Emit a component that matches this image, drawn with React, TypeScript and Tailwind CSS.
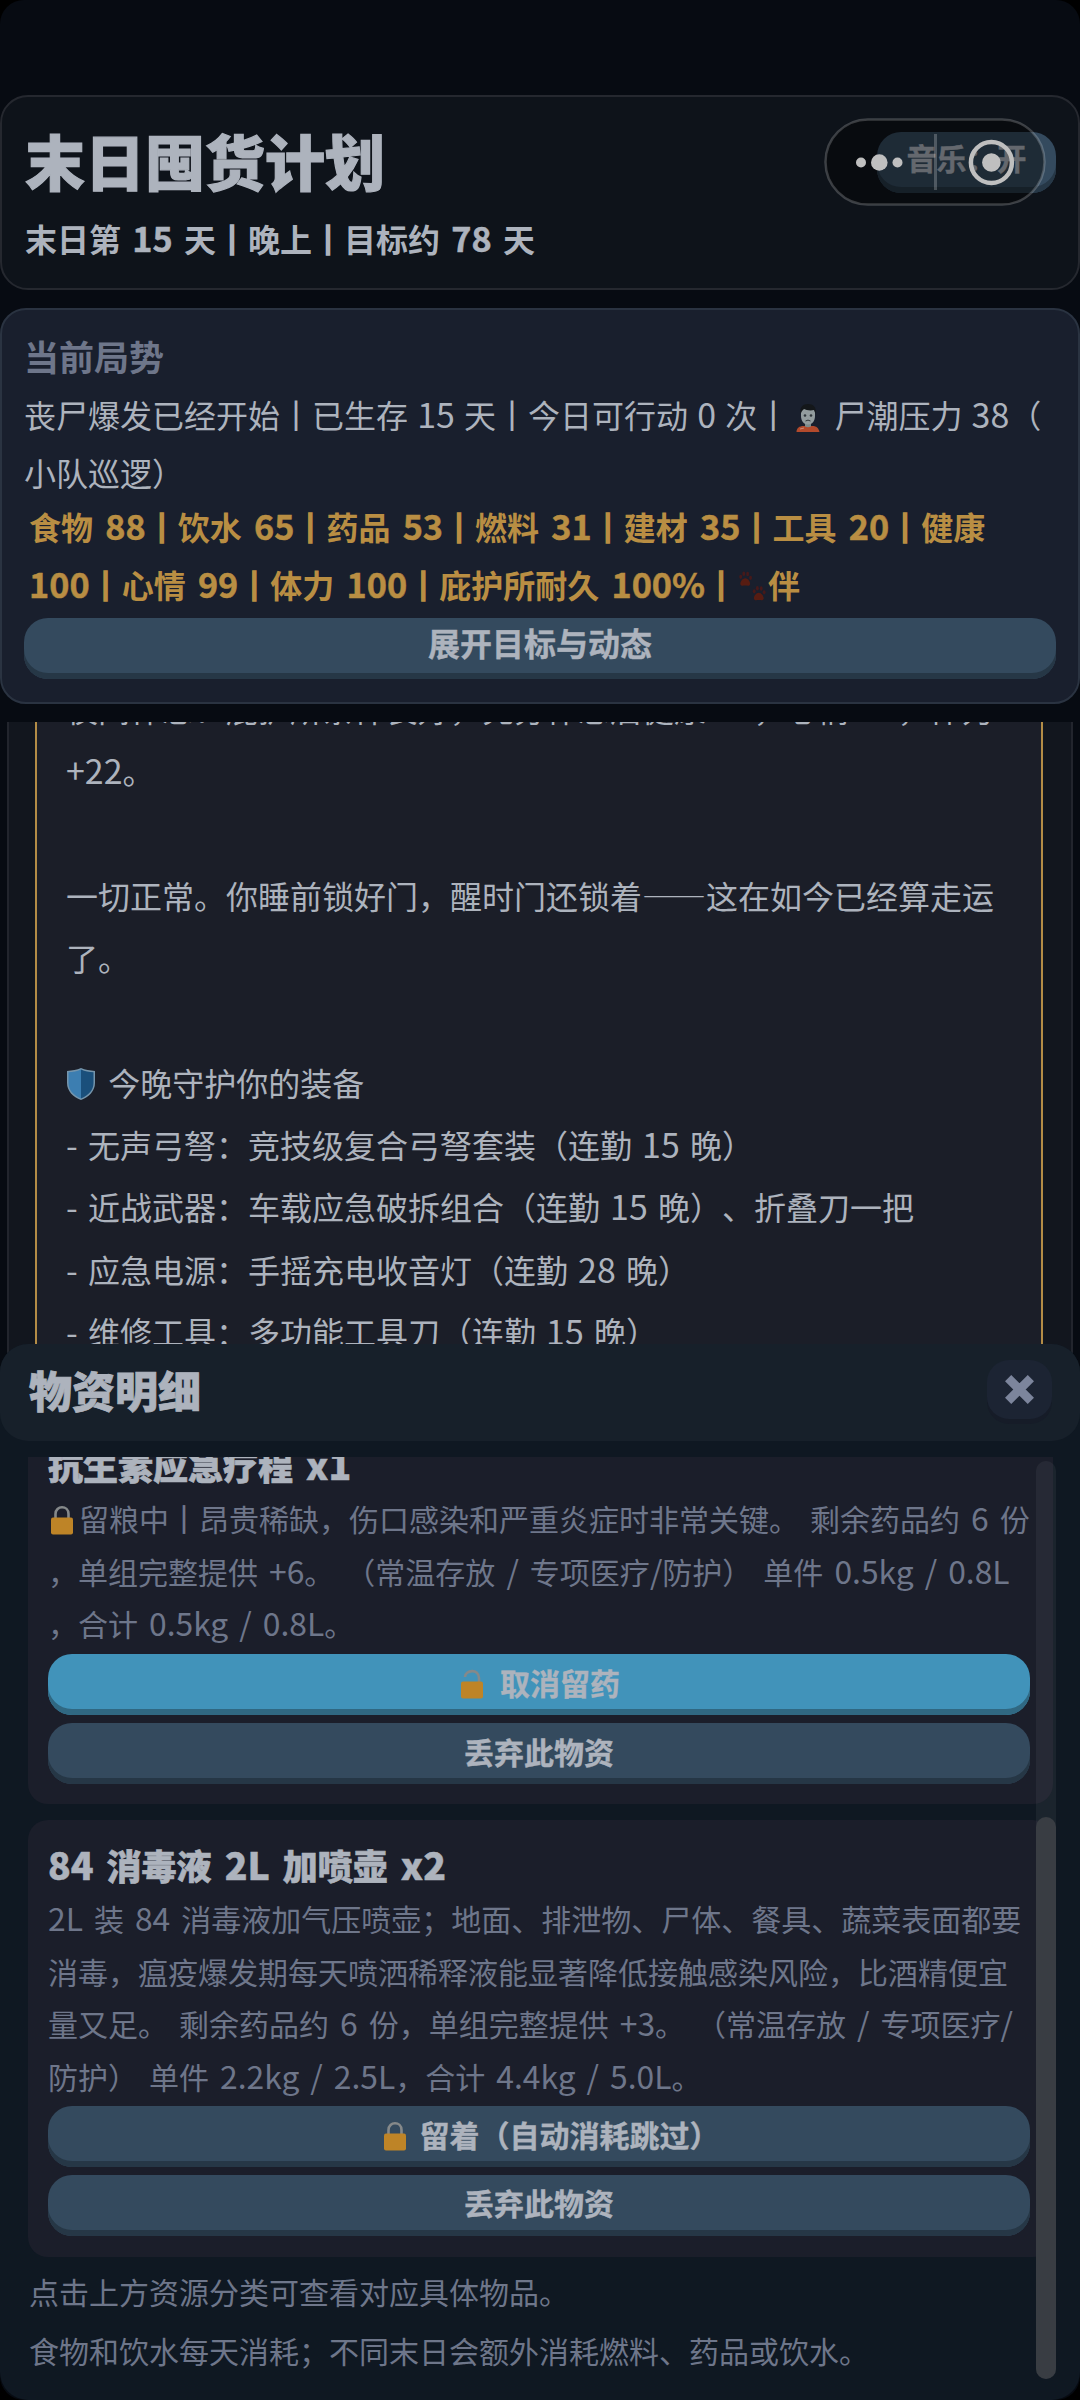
import React from 'react';

const Bar = ({ bold }: { bold?: boolean }) => (
  <span
    className={`inline-block ${
      bold ? 'scale-y-[0.9] [-webkit-text-stroke:3px]' : 'scale-y-[0.92] [-webkit-text-stroke:1.3px]'
    }`}
  >
    ｜
  </span>
);

// latin runs are set a bit larger than the chinese around them
const Mixed = ({ text, bold }: { text: string; bold?: boolean }) => (
  <>
    {text.split(/([0-9A-Za-z+%.\/-]+|｜)/).map((part, i) => {
      if (part === '｜') return <Bar key={i} bold={bold} />;
      if (i % 2 === 0) return part;
      return (
        <span
          key={i}
          className={bold ? 'text-[1.07em] leading-none [-webkit-text-stroke:0.5px]' : 'text-[1.06em] leading-none'}
        >
          {part}
        </span>
      );
    })}
  </>
);

const Lock = ({ open = false }: { open?: boolean }) => (
  <svg viewBox="0 0 28 32" className="mr-[3px] inline-block w-[28px] h-[32px] align-[-5px]">
    <path
      d={open ? 'M7 9c0-7 14-9 14 1v5' : 'M7.500 16V10c0-9 13-9 13 0v6'}
      fill="none"
      stroke="#85898a"
      strokeWidth="2.600"
    />
    <rect x="3" y="13.500" width="22" height="17" rx="2" fill="#be8427" />
  </svg>
);

const Shield = () => (
  <svg viewBox="0 0 30 34" className="mr-[2px] inline-block w-[30px] h-[34px] align-[-5px]">
    <path d="M15 1C19 3 24 3.500 29 4v12c0 8-6 14-14 17C7 30 1 24 1 16V4c5-.5 10-1 14-3z" fill="#7595ac" />
    <path d="M15 2.500C11 4.500 7 5 2.500 5.300V16c0 7 5 12.500 12.500 15.500z" fill="#3c7eb1" />
    <path d="M15 2.500c4 2 8 2.500 12.500 2.800V16c0 7-5 12.500-12.500 15.500z" fill="#1a4f7b" />
  </svg>
);

const Zombie = () => (
  <svg viewBox="0 0 24 30" className="ml-[7px] mr-[5px] inline-block w-[24px] h-[30px] align-[-5px]">
    <path d="M.5 29c0-4 3-6 7-6h9c4 0 6 2 7 6z" fill="#b34a2c" />
    <path d="M9 18h6v5.500q-3 1.500-6 0z" fill="#7c8a8b" />
    <path d="M5 9c0-3 3-4 7-4s7 1 7 4v4c0 5-3 8.500-7 8.500S5 18 5 13z" fill="#939c9e" />
    <path d="M4.500 11C3.500 4 7 1 12 1s9 3 7.500 10l-1.500-4c-4 1-8 0-10-1l-2 2z" fill="#14171a" />
    <circle cx="9" cy="12.500" r="1.300" fill="#30373b" />
    <circle cx="15" cy="12.500" r="1.300" fill="#30373b" />
    <path d="M9.500 18q2.500-1.800 5 0" stroke="#30373b" fill="none" />
    <path d="M4 26l4-1" stroke="#cf8a77" />
  </svg>
);

const Paw = ({ x, y }: { x: number; y: number }) => (
  <g transform={`translate(${x} ${y})`}>
    <path d="M6.500 7.500c3 0 5.500 4 5 6.500-1 2-3 1-5 1s-4 1-5-1c-.5-2.500 2-6.500 5-6.500z" fill="#571c12" />
    <ellipse cx="1.800" cy="6" rx="1.500" ry="2.200" />
    <ellipse cx="5" cy="2.800" rx="1.500" ry="2.300" />
    <ellipse cx="9" cy="3" rx="1.500" ry="2.300" />
    <ellipse cx="12" cy="7" rx="1.500" ry="2.200" />
  </g>
);

const Paws = () => (
  <svg viewBox="0 0 30 34" className="mx-[1px] inline-block w-[29px] h-[33px] align-[-5px]" fill="#45191a">
    <Paw x={1} y={1} />
    <Paw x={15} y={16} />
  </svg>
);

interface ButtonProps {
  children: React.ReactNode;
  active?: boolean;
  className?: string;
}

const GameButton: React.FC<ButtonProps> = ({ children, active, className }) => (
  <button
    className={`block w-full h-[61px] rounded-[24px] text-center font-bold whitespace-nowrap text-[#adb3bd] [-webkit-text-stroke:0.4px] ${
      active ? 'bg-[#4193ba] shadow-[inset_0_-6px_0_#306882]' : 'bg-[#344a5e] shadow-[inset_0_-6px_0_#263746]'
    } ${className ?? ''}`}
  >
    {children}
  </button>
);

const Header = () => (
  <header className="relative h-[195px] rounded-[28px] border-2 border-[#25282f] bg-[#0e131a] pl-[23px] text-[#adb3bd]">
    <h1 className="pt-[27px] text-[60px] leading-[72px] font-black [-webkit-text-stroke:1.2px]">末日囤货计划</h1>
    <p className="pt-[18px] text-[32px] leading-[48px] [word-spacing:4px] font-bold">
      <Mixed bold text="末日第 15 天｜晚上｜目标约 78 天" />
    </p>
    <div className="absolute right-[22px] top-[35px] w-[179px]">
      <GameButton className="pb-[10px] text-[30px]">音乐：开</GameButton>
    </div>
    {/* host app capsule floats over the music button */}
    <svg viewBox="0 0 222 88" className="absolute left-[822px] top-[21px] w-[222px] h-[88px]">
      <rect x="1.500" y="1.500" width="219" height="85" rx="42.500" fill="#000" fillOpacity=".42" stroke="#fff" strokeOpacity=".2" strokeWidth="2.500" />
      <path d="M111.500 16v56" stroke="#fff" strokeOpacity=".22" strokeWidth="3" />
      <g fill="#bfbfbf">
        <circle cx="37" cy="44.500" r="5" />
        <circle cx="55.300" cy="44.500" r="8.300" />
        <circle cx="73.500" cy="44.500" r="5" />
        <circle cx="167.400" cy="44.500" r="9.300" />
      </g>
      <circle cx="167.400" cy="44.500" r="20.500" fill="none" stroke="#bfbfbf" strokeWidth="4.500" />
    </svg>
  </header>
);

const Status = () => (
  <section className="mt-[18px] h-[396px] rounded-[26px] border-2 border-[#2a3341] bg-[#191f2d] px-[22px] pt-[20px] whitespace-nowrap">
    <h2 className="text-[35px] leading-[52px] font-bold text-[#6e768a]">当前局势</h2>
    <div className="mt-[3px] text-[32px] [word-spacing:2px] text-[#adb3bd]">
      <p className="h-[58px] leading-[58px]">
        <Mixed text="丧尸爆发已经开始｜已生存 15 天｜今日可行动 0 次｜" />
        <Zombie /> <Mixed text="尸潮压力 38（" />
      </p>
      <p className="h-[58px] leading-[58px]">小队巡逻）</p>
    </div>
    <div className="-mt-[4px] pl-[5px] text-[32px] [word-spacing:5px] font-bold text-[#b98e43]">
      <p className="h-[58px] leading-[58px]">
        <Mixed bold text="食物 88｜饮水 65｜药品 53｜燃料 31｜建材 35｜工具 20｜健康" />
      </p>
      <p className="h-[58px] leading-[58px]">
        <Mixed bold text="100｜心情 99｜体力 100｜庇护所耐久 100%｜" />
        <Paws />伴
      </p>
    </div>
    <GameButton className="mt-[5px] pb-[13px] text-[32px]">展开目标与动态</GameButton>
  </section>
);

const log = [
  '夜间休息：庇护所条件良好，充分休息后健康 +6，心情 +8，体力',
  '+22。',
  '',
  '一切正常。你睡前锁好门，醒时门还锁着——这在如今已经算走运',
  '了。',
  '',
  'shield',
  '- 无声弓弩：竞技级复合弓弩套装（连勤 15 晚）',
  '- 近战武器：车载应急破拆组合（连勤 15 晚）、折叠刀一把',
  '- 应急电源：手摇充电收音灯（连勤 28 晚）',
  '- 维修工具：多功能工具刀（连勤 15 晚）',
];

const EventLog = () => (
  <section className="mx-[7px] mt-[18px] h-[680px] overflow-hidden border-x-2 border-[#22252d] bg-[#12161e] pl-[26px] pr-[28px]">
    <div className="h-full border-x-2 border-[#b38c46] bg-[#1b1e28] pl-[29px] text-[32px] [word-spacing:3px] whitespace-nowrap text-[#adb3bd]">
      <div className="-mt-[45px]">
        {log.map((line, i) => (
          <p key={i} className="h-[62.300px] leading-[62px]">
            {line === 'shield' ? (
              <>
                <Shield /> 今晚守护你的装备
              </>
            ) : (
              <Mixed text={line} />
            )}
          </p>
        ))}
      </div>
    </div>
  </section>
);

interface ItemProps {
  name: string;
  locked?: boolean;
  lines: string[];
  children: React.ReactNode;
  className: string;
}

const SupplyItem: React.FC<ItemProps> = ({ name, locked, lines, children, className }) => (
  <div className={`rounded-[20px] bg-[#1b1e2a] px-[20px] pt-[19px] ${className}`}>
    <h3 className="h-[52px] text-[35px] leading-[52px] [word-spacing:5px] font-black text-[#adb3bd] [-webkit-text-stroke:0.6px]">
      <Mixed bold text={name} />
    </h3>
    <div className="mt-[1px] text-[30px] [word-spacing:4.300px]">
      {lines.map((line, i) => (
        <p key={i} className="h-[52.500px] leading-[52px]">
          {locked && i === 0 && <Lock />}
          <Mixed text={line} />
        </p>
      ))}
    </div>
    <div className="mt-[4px] flex w-[982px] flex-col gap-[8px]">{children}</div>
  </div>
);

const Supplies = () => (
  <section className="absolute inset-x-0 top-[1344px] h-[1056px] rounded-[28px] bg-[#0f1822] text-[#6e768a]">
    <div className="flex h-[97px] items-center justify-between rounded-[28px] bg-[#17202a] pl-[29px] pr-[28px]">
      <h2 className="mb-[6px] text-[43px] font-black text-[#adb3bd] [-webkit-text-stroke:0.8px]">物资明细</h2>
      <button className="mb-[7px] flex h-[59px] w-[65px] items-center justify-center rounded-[22px] bg-[#1c2433] shadow-[0_5px_0_#161c28]">
        <svg viewBox="0 0 30 30" className="h-[31px] w-[31px]">
          <path d="M4 4l22 22M26 4L4 26" stroke="#7c859c" strokeWidth="8.500" />
        </svg>
      </button>
    </div>

    <div className="relative mt-[16px] h-[943px] overflow-hidden pl-[28px] pr-[27px] whitespace-nowrap">
      <SupplyItem
        name="抗生素应急疗程 x1"
        locked
        lines={[
          '留粮中｜昂贵稀缺，伤口感染和严重炎症时非常关键。 剩余药品约 6 份',
          '，单组完整提供 +6。 （常温存放 / 专项医疗/防护） 单件 0.5kg / 0.8L',
          '，合计 0.5kg / 0.8L。',
        ]}
        className="-mt-[37px] h-[384px]"
      >
        <GameButton active className="pb-[3px] text-[30px] [word-spacing:4px]">
          <Lock open /> 取消留药
        </GameButton>
        <GameButton className="pb-[4px] text-[30px]">丢弃此物资</GameButton>
      </SupplyItem>

      <SupplyItem
        name="84 消毒液 2L 加喷壶 x2"
        lines={[
          '2L 装 84 消毒液加气压喷壶；地面、排泄物、尸体、餐具、蔬菜表面都要',
          '消毒，瘟疫爆发期每天喷洒稀释液能显著降低接触感染风险，比酒精便宜',
          '量又足。 剩余药品约 6 份，单组完整提供 +3。 （常温存放 / 专项医疗/',
          '防护） 单件 2.2kg / 2.5L，合计 4.4kg / 5.0L。',
        ]}
        className="mt-[16px] h-[437px]"
      >
        <GameButton className="pb-[5px] pl-[22px] text-[30px] [word-spacing:1px]">
          <Lock /> 留着（自动消耗跳过）
        </GameButton>
        <GameButton className="pb-[6px] text-[30px]">丢弃此物资</GameButton>
      </SupplyItem>

      <div className="pt-[5px] pl-[1px] text-[30px] leading-[59px]">
        <p>点击上方资源分类可查看对应具体物品。</p>
        <p>食物和饮水每天消耗；不同末日会额外消耗燃料、药品或饮水。</p>
      </div>

      {/* scrollbar */}
      <div className="absolute right-[24px] top-[4px] h-[918px] w-[20px] rounded-full bg-white/5">
        <div className="h-[562px] translate-y-[356px] rounded-full bg-[#393d43]" />
      </div>
    </div>
  </section>
);

export default function App() {
  return (
    <div
      lang="zh-CN"
      className="h-[2400px] w-[1080px] bg-black font-['Noto_Sans_CJK_SC',sans-serif] [text-spacing-trim:space-all]"
    >
      <main className="relative h-full overflow-hidden rounded-[24px] bg-[#070b12] pt-[95px]">
        <Header />
        <Status />
        <EventLog />
        <Supplies />
      </main>
    </div>
  );
}
